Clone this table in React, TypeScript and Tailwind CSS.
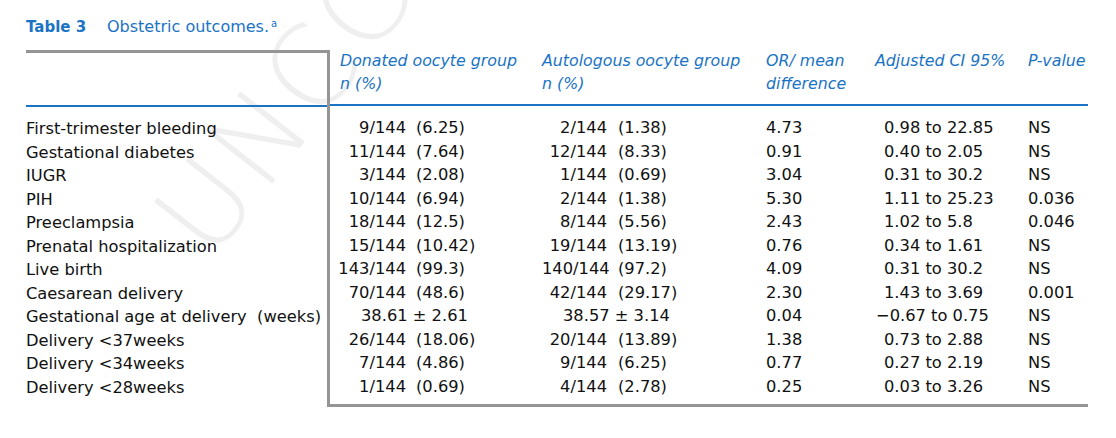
const rows: {
  label: string
  d: [string, string] | string
  a: [string, string] | string
  or: string
  ci: string
  p: string
}[] = [
  { label: 'First-trimester bleeding', d: ['9/144', '(6.25)'], a: ['2/144', '(1.38)'], or: '4.73', ci: '0.98 to 22.85', p: 'NS' },
  { label: 'Gestational diabetes', d: ['11/144', '(7.64)'], a: ['12/144', '(8.33)'], or: '0.91', ci: '0.40 to 2.05', p: 'NS' },
  { label: 'IUGR', d: ['3/144', '(2.08)'], a: ['1/144', '(0.69)'], or: '3.04', ci: '0.31 to 30.2', p: 'NS' },
  { label: 'PIH', d: ['10/144', '(6.94)'], a: ['2/144', '(1.38)'], or: '5.30', ci: '1.11 to 25.23', p: '0.036' },
  { label: 'Preeclampsia', d: ['18/144', '(12.5)'], a: ['8/144', '(5.56)'], or: '2.43', ci: '1.02 to 5.8', p: '0.046' },
  { label: 'Prenatal hospitalization', d: ['15/144', '(10.42)'], a: ['19/144', '(13.19)'], or: '0.76', ci: '0.34 to 1.61', p: 'NS' },
  { label: 'Live birth', d: ['143/144', '(99.3)'], a: ['140/144', '(97.2)'], or: '4.09', ci: '0.31 to 30.2', p: 'NS' },
  { label: 'Caesarean delivery', d: ['70/144', '(48.6)'], a: ['42/144', '(29.17)'], or: '2.30', ci: '1.43 to 3.69', p: '0.001' },
  { label: 'Gestational age at delivery  (weeks)', d: '38.61 ± 2.61', a: '38.57 ± 3.14', or: '0.04', ci: '−0.67 to 0.75', p: 'NS' },
  { label: 'Delivery <37weeks', d: ['26/144', '(18.06)'], a: ['20/144', '(13.89)'], or: '1.38', ci: '0.73 to 2.88', p: 'NS' },
  { label: 'Delivery <34weeks', d: ['7/144', '(4.86)'], a: ['9/144', '(6.25)'], or: '0.77', ci: '0.27 to 2.19', p: 'NS' },
  { label: 'Delivery <28weeks', d: ['1/144', '(0.69)'], a: ['4/144', '(2.78)'], or: '0.25', ci: '0.03 to 3.26', p: 'NS' },
]

const head = 'h-[57px] border-b-2 border-[#1a73c4] text-[#1a73c4] italic leading-[23.3px] -mt-px text-[15.8px]'
const body = 'pt-[10px] pb-[5px] border-b-[3px] border-[#959595] leading-[23.55px]'

export default function App() {
  return (
    <div className="relative w-[1116px] h-[438px] overflow-hidden bg-white text-[16.3px] text-[#111] font-['DejaVu_Sans',sans-serif]">
      {/* faint watermark */}
      <div className="absolute left-[180px] top-[182px] origin-left -rotate-[52deg] text-[112px] leading-none tracking-[4px] font-light text-[#efefef] select-none pointer-events-none">
        UNCC
      </div>

      <div className="relative">
        <div className="pt-[17px] pl-[26px] h-[50px] text-[16px] leading-[20px] text-[#1a73c4]">
          <span className="inline-block w-[81px] font-bold text-[15px]">Table 3</span>
          <span>Obstetric outcomes.</span>
          <sup className="text-[10px] ml-[2px]">a</sup>
        </div>

        <div className="flex pl-[26px]">
          {/* label column */}
          <div className="w-[304px] flex flex-col border-t-[3px] border-r-[3px] border-[#959595]">
            <div className="h-[54px] border-b-2 border-[#1a73c4]" />
            <div className="pt-[10px] leading-[23.55px]">
              {rows.map((r) => (
                <div key={r.label} className="whitespace-pre">{r.label}</div>
              ))}
            </div>
          </div>

          {/* donated */}
          <div className="w-[212px]">
            <div className={`${head} pl-[10px]`}>
              <div>Donated oocyte group</div>
              <div>n (%)</div>
            </div>
            <div className={body}>
              {rows.map((r) =>
                typeof r.d === 'string' ? (
                  <div key={r.label} className="pl-[31px] whitespace-pre">{r.d}</div>
                ) : (
                  <div key={r.label} className="flex">
                    <span className="w-[76px] text-right">{r.d[0]}</span>
                    <span className="ml-[10px]">{r.d[1]}</span>
                  </div>
                )
              )}
            </div>
          </div>

          {/* autologous */}
          <div className="w-[224px]">
            <div className={head}>
              <div>Autologous oocyte group</div>
              <div>n (%)</div>
            </div>
            <div className={body}>
              {rows.map((r) =>
                typeof r.a === 'string' ? (
                  <div key={r.label} className="pl-[21px] whitespace-pre">{r.a}</div>
                ) : (
                  <div key={r.label} className="flex">
                    <span className="w-[65px] text-right">{r.a[0]}</span>
                    <span className="ml-[11px]">{r.a[1]}</span>
                  </div>
                )
              )}
            </div>
          </div>

          {/* OR */}
          <div className="w-[109px]">
            <div className={head}>
              <div>OR/ mean</div>
              <div>difference</div>
            </div>
            <div className={body}>
              {rows.map((r) => (
                <div key={r.label}>{r.or}</div>
              ))}
            </div>
          </div>

          {/* CI */}
          <div className="w-[153px]">
            <div className={head}>
              <div>Adjusted CI 95%</div>
            </div>
            <div className={body}>
              {rows.map((r) => (
                <div key={r.label} className={r.ci.startsWith('−') ? 'pl-px' : 'pl-[9px]'}>
                  {r.ci}
                </div>
              ))}
            </div>
          </div>

          {/* p-value */}
          <div className="w-[60px]">
            <div className={head}>
              <div>P-value</div>
            </div>
            <div className={body}>
              {rows.map((r) => (
                <div key={r.label}>{r.p}</div>
              ))}
            </div>
          </div>
        </div>
      </div>
    </div>
  )
}
